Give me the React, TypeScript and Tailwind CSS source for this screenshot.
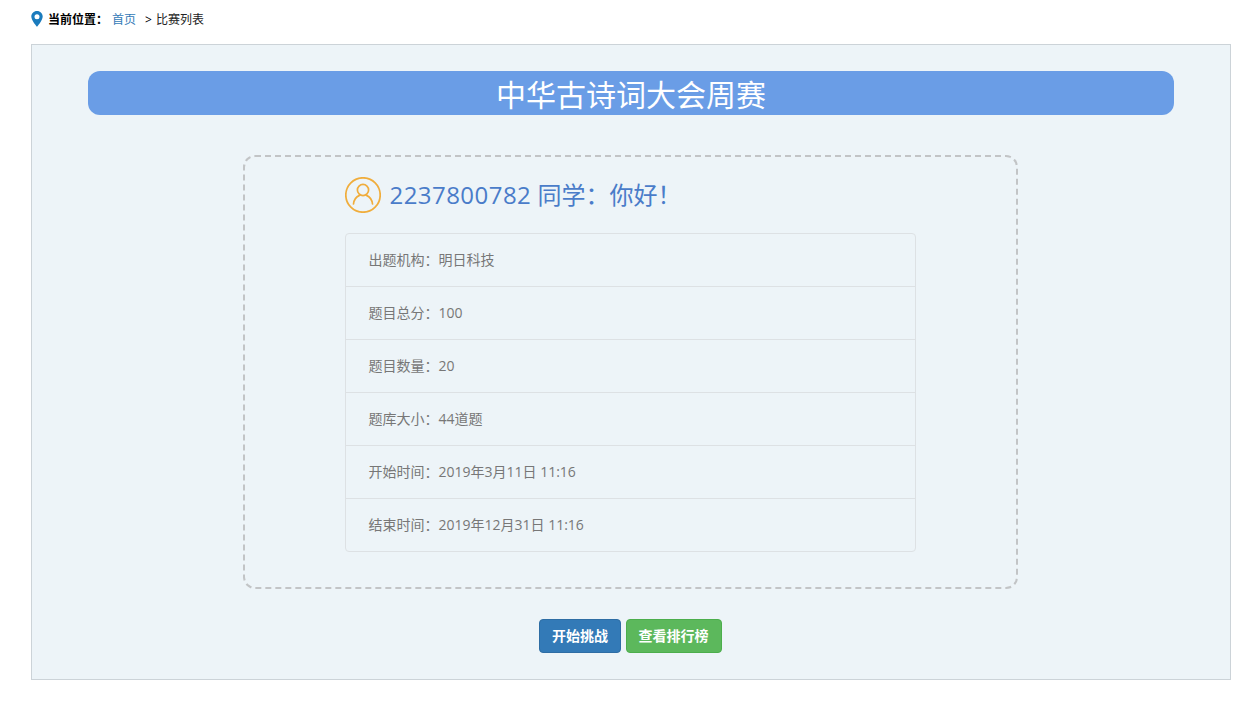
const font = "font-['Open_Sans','Noto_Sans_CJK_SC',sans-serif]";

const rows = [
  "出题机构：明日科技",
  "题目总分：100",
  "题目数量：20",
  "题库大小：44道题",
  "开始时间：2019年3月11日 11:16",
  "结束时间：2019年12月31日 11:16",
];

export default function App() {
  return (
    <div className={`${font} h-[703px] w-[1253px] overflow-hidden bg-white`}>
      {/* Breadcrumb */}
      <div className="flex h-[44px] items-start pl-[31px] pt-[11px] text-xs leading-[17px]">
        <svg viewBox="0 0 12 16" className="h-[16px] w-[12px]">
          <path
            fillRule="evenodd"
            fill="#1a7bbd"
            d="M6 0C2.7 0 .3 2.5.3 5.6.3 9.4 6 16 6 16s5.7-6.6 5.7-10.4C11.7 2.5 9.3 0 6 0Zm0 3.2a2.5 2.5 0 1 1 0 5 2.5 2.5 0 0 1 0-5Z"
          />
        </svg>
        <span className="ml-[5px] font-bold text-black">当前位置：</span>
        <span className="ml-[4px] text-[#337ab7]">首页</span>
        <span className="ml-[9px] text-black">&gt;</span>
        <span className="ml-[4px] text-[#222]">比赛列表</span>
      </div>

      {/* Panel */}
      <div className="ml-[31px] flex h-[636px] w-[1200px] flex-col items-center border border-[#ccd3d8] bg-[#edf4f8] pt-[26px]">
        <div className="h-[44px] w-[1086px] rounded-[12px] bg-[#6a9de6] text-center text-[30px] leading-[47px] text-white">
          中华古诗词大会周赛
        </div>

        <div className="mr-[2px] mt-[40px] h-[434px] w-[775px] rounded-[12px] border-2 border-dashed border-[#c2c4c6] px-[100px] pt-[19px]">
          <div className="flex h-[38px] items-center">
            <svg viewBox="0 0 36 36" fill="none" stroke="#f0ad3c" strokeWidth="1.7" className="h-[36px] w-[36px]">
              <circle cx="18" cy="18" r="17.2" />
              <circle cx="18" cy="13" r="5.6" />
              <path d="M8.5 27c.5-4.5 3.5-7.5 6-8.6M27.5 27c-.5-4.5-3.5-7.5-6-8.6" strokeLinecap="round" />
            </svg>
            <span className="ml-[9px] mt-[-1px] text-2xl leading-[38px] text-[#4a7cc9]">
              <span className="tracking-[0.45px]">2237800782</span> 同学：你好！
            </span>
          </div>

          <ul className="mt-[19px] overflow-hidden rounded-[4px] border border-[#dde1e4] text-sm text-[#777]">
            {rows.map((r, i) => (
              <li
                key={r}
                className={`flex items-center pl-[23px] pr-[22px] ${i > 0 ? "h-[53px] border-t border-[#dde1e4]" : "h-[52px]"}`}
              >
                {r}
              </li>
            ))}
          </ul>
        </div>

        <div className="mr-[2px] mt-[30px] flex gap-[5px]">
          <button className="h-[34px] w-[82px] rounded-[4px] border border-[#2e6da4] bg-[#337ab7] pl-[1px] text-sm font-bold text-white">
            开始挑战
          </button>
          <button className="h-[34px] w-[96px] rounded-[4px] border border-[#4cae4c] bg-[#5cb85c] text-sm font-bold text-white">
            查看排行榜
          </button>
        </div>
      </div>
    </div>
  );
}
